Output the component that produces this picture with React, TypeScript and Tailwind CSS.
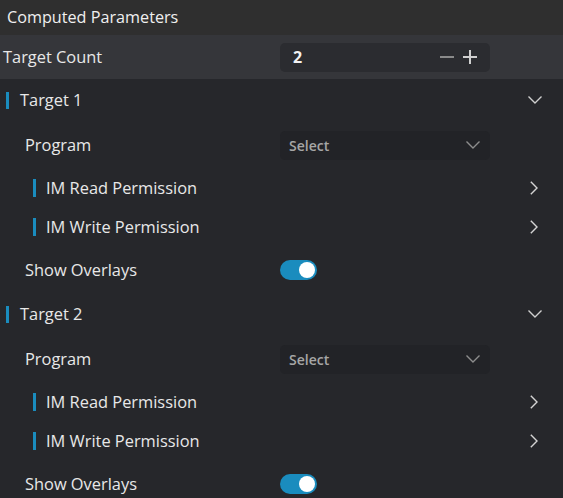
import React from "react";

const font = { fontFamily: '"Segoe UI", "Open Sans", "Noto Sans", sans-serif' };

function ChevronDown({ className = "" }: { className?: string }) {
  return (
    <svg className={className} width="14" height="8" viewBox="0 0 14 8" fill="none">
      <path d="M0.5 0.5 L7 7 L13.5 0.5" stroke="currentColor" strokeWidth="1.4" />
    </svg>
  );
}

function ChevronRight() {
  return (
    <svg width="8" height="14" viewBox="0 0 8 14" fill="none" className="text-[#d4d4d4]">
      <path d="M0.8 0.8 L7 7 L0.8 13.2" stroke="currentColor" strokeWidth="1.4" />
    </svg>
  );
}

function Toggle() {
  return (
    <div className="w-[37px] h-[20px] rounded-full bg-[#1a8cbe] flex items-center justify-end pr-[2px]">
      <div className="w-[16px] h-[16px] rounded-full bg-white" />
    </div>
  );
}

function Target({ n }: { n: number }) {
  return (
    <div>
      <div className="h-[42px] flex items-center pl-[6px] pr-[21px]">
        <div className="w-[3px] h-[17px] bg-[#1a8cbe]" />
        <span className="ml-[11px] text-[16.4px] text-[#e8e8e8]">Target {n}</span>
        <div className="flex-1" />
        <ChevronDown className="text-[#cfcfcf]" />
      </div>
      <div className="h-[48px] flex items-center">
        <span className="w-[280px] pl-[25px] text-[16.4px] text-[#e8e8e8]">Program</span>
        <div className="w-[210px] h-[29px] rounded-[5px] bg-[#222327] flex items-center pl-[9px] pr-[10px]">
          <span className="text-[14px] font-semibold text-[#a6a6a6]">Select</span>
          <div className="flex-1" />
          <ChevronDown className="text-[#8d8d8d]" />
        </div>
      </div>
      {["IM Read Permission", "IM Write Permission"].map((t, i) => (
        <div key={t} className={`${i === 0 ? "h-[38px]" : "h-[40px]"} flex items-center pl-[33px] pr-[25px]`}>
          <div className="w-[3px] h-[18px] bg-[#1a8cbe]" />
          <span className="ml-[10px] text-[16.4px] text-[#e8e8e8]">{t}</span>
          <div className="flex-1" />
          <ChevronRight />
        </div>
      ))}
      <div className="h-[46px] flex items-center">
        <span className="w-[280px] pl-[25px] text-[16.4px] text-[#e8e8e8]">Show Overlays</span>
        <Toggle />
      </div>
    </div>
  );
}

export default function App() {
  return (
    <div className="w-[563px] h-[498px] overflow-hidden bg-[#26272b]" style={font}>
      <div className="h-[35px] bg-[#2f2f2f] flex items-center pl-[7px] text-[16.2px] text-[#f0f0f0]">
        Computed Parameters
      </div>
      <div className="h-[44px] bg-[#35363a] flex items-center">
        <span className="w-[280px] pl-[3px] text-[16.4px] text-[#e8e8e8]">Target Count</span>
        <div className="w-[210px] h-[29px] rounded-[5px] bg-[#2b2c30] flex items-center pl-[13px] pr-[13px]">
          <span className="text-[16px] font-bold text-[#f2f2f2]">2</span>
          <div className="flex-1" />
          <div className="w-[14px] h-[2px] bg-[#8a8a8a]" />
          <div className="relative w-[14px] h-[14px] ml-[9px]">
            <div className="absolute left-0 top-[6px] w-[14px] h-[2px] bg-[#d0d0d0]" />
            <div className="absolute top-0 left-[6px] w-[2px] h-[14px] bg-[#d0d0d0]" />
          </div>
        </div>
      </div>
      <Target n={1} />
      <Target n={2} />
    </div>
  );
}
